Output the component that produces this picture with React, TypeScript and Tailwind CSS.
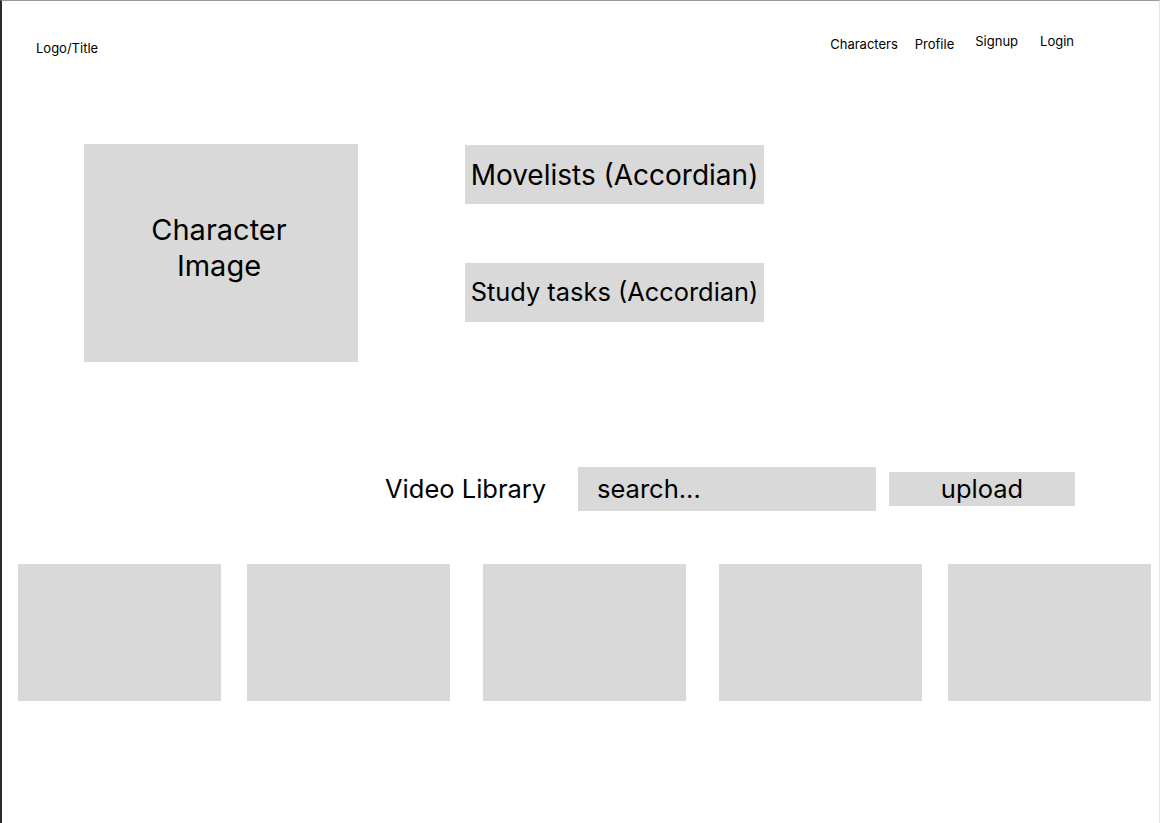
import React from 'react';

const navLinks = [
  { label: 'Characters', cls: 'mt-[3px]' },
  { label: 'Profile', cls: 'mt-[3px] ml-[17px]' },
  { label: 'Signup', cls: 'ml-[21px]' },
  { label: 'Login', cls: 'ml-[22px]' },
];

const App: React.FC = () => {
  return (
    <div
      className="w-[1160px] h-[823px] bg-white text-black border-l-2 border-l-[#2b2b2b] border-t border-t-[#9a9a9a] border-r border-r-[#e2e2e2] overflow-hidden"
      style={{ fontFamily: 'Inter, "Liberation Sans", sans-serif' }}
    >
      {/* header */}
      <header className="flex items-start h-[80px] pt-[32px]">
        <div className="ml-[34px] mt-[7px] text-[13px] leading-[16px]">Logo/Title</div>
        <nav className="flex items-start ml-auto mr-[85px] text-[13px] leading-[16px]">
          {navLinks.map(n => (
            <a key={n.label} className={n.cls}>{n.label}</a>
          ))}
        </nav>
      </header>

      {/* character section */}
      <section className="flex items-start mt-[63px] ml-[82px]">
        <div className="w-[274px] h-[218px] bg-[#d9d9d9] flex items-center justify-center text-center text-[29px] leading-[36px] pb-[10px] pr-[4px]">
          Character<br />Image
        </div>
        <div className="flex flex-col gap-[59px] ml-[107px] mt-[1px]">
          <div className="w-[299px] h-[59px] bg-[#d9d9d9] flex items-center justify-center text-[28px] whitespace-nowrap">
            Movelists (Accordian)
          </div>
          <div className="w-[299px] h-[59px] bg-[#d9d9d9] flex items-center justify-center text-[25.4px] whitespace-nowrap">
            Study tasks (Accordian)
          </div>
        </div>
      </section>

      {/* video library */}
      <section className="flex items-center h-[44px] mt-[105px] ml-[383px]">
        <h2 className="w-[193px] text-[25.5px] font-normal">Video Library</h2>
        <div className="w-[298px] h-[44px] bg-[#d9d9d9] flex items-center pl-[19px] text-[25.5px]">search...</div>
        <button className="w-[186px] h-[34px] bg-[#d9d9d9] ml-[13px] text-[25.5px] leading-[34px]">upload</button>
      </section>

      <section className="flex mt-[53px] ml-[16px]">
        <div className="w-[203px] h-[137px] bg-[#d9d9d9]" />
        <div className="w-[203px] h-[137px] bg-[#d9d9d9] ml-[26px]" />
        <div className="w-[203px] h-[137px] bg-[#d9d9d9] ml-[33px]" />
        <div className="w-[203px] h-[137px] bg-[#d9d9d9] ml-[33px]" />
        <div className="w-[203px] h-[137px] bg-[#d9d9d9] ml-[26px]" />
      </section>
    </div>
  );
};

export default App;
